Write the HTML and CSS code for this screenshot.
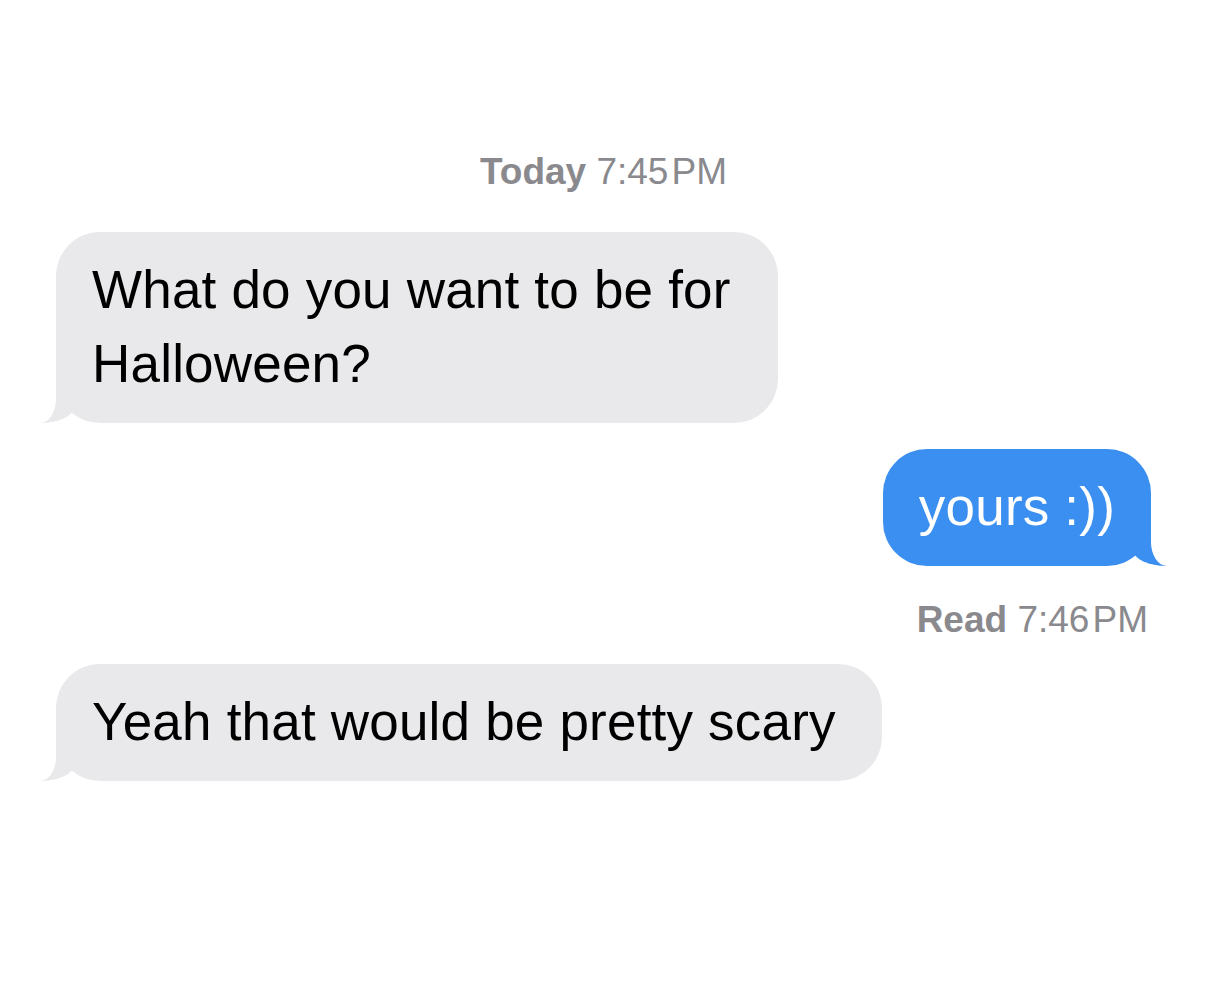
FILE: index.html
```html
<!DOCTYPE html>
<html lang="en">
<head>
<meta charset="utf-8">
<title>Messages</title>
<link rel="stylesheet" href="styles.css">
</head>
<body>
<main class="chat">
  <div class="stamp"><span class="stamp-label">Today</span> 7:45&#8202;PM</div>
  <div class="row row-them">
    <div class="bubble bubble-them bubble-wrap">What do you want to be for Halloween?</div>
  </div>
  <div class="row row-me">
    <div class="bubble bubble-me">yours :))</div>
  </div>
  <div class="receipt"><span class="stamp-label">Read</span> 7:46&#8202;PM</div>
  <div class="row row-them row-last">
    <div class="bubble bubble-them bubble-wide">Yeah that would be pretty scary</div>
  </div>
</main>
</body>
</html>
```
FILE: styles.css
```css
html, body {
  margin: 0;
  padding: 0;
  background: #ffffff;
}

body {
  width: 1206px;
  height: 991px;
  overflow: hidden;
  font-family: "Liberation Sans", Arial, sans-serif;
}

.chat {
  display: flex;
  flex-direction: column;
  padding: 151px 55px 0 56px;
}

.stamp {
  text-align: center;
  font-size: 37px;
  line-height: 42px;
  color: #8a8a8e;
}

.stamp-label {
  font-weight: 700;
}

.receipt {
  text-align: right;
  font-size: 37px;
  line-height: 42px;
  color: #8a8a8e;
  margin-top: 33px;
  padding-right: 3px;
}

.row {
  display: flex;
}

.row-them {
  justify-content: flex-start;
  margin-top: 39px;
}

.row-me {
  justify-content: flex-end;
  margin-top: 26px;
}

.row-last {
  margin-top: 23px;
}

.bubble {
  position: relative;
  font-size: 53px;
  line-height: 74px;
  letter-spacing: 0.2px;
  padding: 21px 36px 22px 36px;
  border-radius: 44px;
  width: fit-content;
}

.bubble-wrap {
  max-width: 650px;
}

.bubble-wide {
  padding-right: 46px;
}

.bubble-them {
  background: #e9e9eb;
  color: #000000;
}

.bubble-me {
  background: #3a8ff0;
  color: #ffffff;
}

.bubble::before,
.bubble::after {
  content: "";
  position: absolute;
  bottom: 0;
  height: 44px;
}

.bubble-them::before {
  left: -16px;
  width: 34px;
  background: #e9e9eb;
  border-bottom-right-radius: 34px 16px;
}

.bubble-them::after {
  left: -60px;
  width: 60px;
  background: #ffffff;
  border-bottom-right-radius: 16px 24px;
}

.bubble-me::before {
  right: -16px;
  width: 34px;
  background: #3a8ff0;
  border-bottom-left-radius: 34px 16px;
}

.bubble-me::after {
  right: -60px;
  width: 60px;
  background: #ffffff;
  border-bottom-left-radius: 16px 24px;
}
```
